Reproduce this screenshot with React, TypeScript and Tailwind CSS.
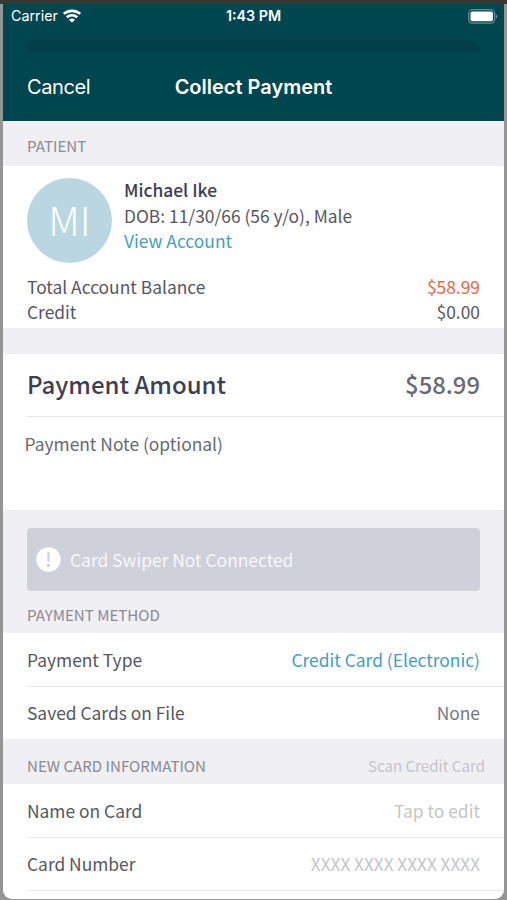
import React from 'react';

interface SectionHeaderProps {
    title: string;
    action?: string;
    sizeClass?: string;
}

interface RowProps {
    label: string;
    value: string;
    valueClass: string;
    sizeClass?: string;
}

const WifiIcon: React.FC = () => (
    <svg width="18" height="14" viewBox="0 0 18 14" fill="none" stroke="white" strokeWidth="2.6">
        <path d="M.8 4.9C5.3 .8 12.7 .8 17.2 4.9" />
        <path d="M3.8 8.3C6.7 5.6 11.3 5.6 14.2 8.3" />
        <path d="M9 13.6L5.9 10.7C7.7 9.1 10.3 9.1 12.1 10.7Z" fill="white" stroke="none" />
    </svg>
);

const BatteryIcon: React.FC = () => (
    <svg width="30" height="15" viewBox="0 0 30 15">
        <rect x=".7" y=".7" width="26" height="13.4" rx="4" fill="none" stroke="white" strokeOpacity=".4" strokeWidth="1.3" />
        <rect x="2.5" y="2.6" width="22.4" height="9.6" rx="1.8" fill="white" />
        <path d="M28 5.2C29.5 6 29.5 8.8 28 9.6Z" fill="white" fillOpacity=".45" />
    </svg>
);

const AlertIcon: React.FC = () => (
    <svg width="25" height="25" viewBox="0 0 25 25">
        <circle cx="12.5" cy="12.5" r="12.2" fill="white" />
        <path d="M11.2 5.2H13.8L13.3 15H11.7Z" fill="#ced1da" />
        <circle cx="12.5" cy="18.5" r="1.7" fill="#ced1da" />
    </svg>
);

const SectionHeader: React.FC<SectionHeaderProps> = ({ title, action, sizeClass = 'h-[45px] pt-[8px]' }) => (
    <div className={`flex shrink-0 items-center justify-between bg-[#efeff4] pr-[19px] pl-6 text-[15.1px] text-[#8b8b91] ${sizeClass}`}>
        <span>{title}</span>
        {action && <span className="text-[#c5c5ca]">{action}</span>}
    </div>
);

const Row: React.FC<RowProps> = ({ label, value, valueClass, sizeClass = 'h-[53px]' }) => (
    <div className={`ml-6 flex shrink-0 items-center justify-between pr-6 ${sizeClass}`}>
        <span>{label}</span>
        <span className={valueClass}>{value}</span>
    </div>
);

const Divider: React.FC = () => <div className="ml-6 h-px shrink-0 bg-[#e8e8ea]" />;

export default function App() {
    return (
        <div className="h-[900px] w-[507px] overflow-hidden bg-[#969595] pr-[3px] pb-px pl-[3px] font-['Noto_Sans_CJK_SC',sans-serif] text-[17.4px] leading-[25px] text-[#56565f]">
            <div className="-mx-[3px] h-1 bg-[#393734]" />
            <div className="flex h-[895px] flex-col overflow-hidden rounded-b-[9px] bg-white">
                <header className="flex h-[117px] shrink-0 flex-col bg-[#00464f] font-['Inter',sans-serif] text-white">
                    <div className="grid h-[25px] grid-cols-3 items-center pr-[6px] pl-2 text-[14.3px] leading-none">
                        <div className="flex items-center gap-[5px]">
                            <span>Carrier</span>
                            <WifiIcon />
                        </div>
                        <span className="-ml-[2px] text-center font-semibold">1:43 PM</span>
                        <div className="flex justify-end"><BatteryIcon /></div>
                    </div>
                    <div className="mx-6 mt-[11px] h-3 rounded-t-[10px] bg-[#003f48]" />
                    <div className="grid grow grid-cols-[1fr_auto_1fr] items-center px-6 text-[20px] leading-none">
                        <span className="tracking-[-0.4px]">Cancel</span>
                        <span className="font-semibold">Collect Payment</span>
                    </div>
                </header>

                <SectionHeader title="PATIENT" sizeClass="h-[45px] pt-[4px]" />
                <section className="h-[162px] shrink-0 px-6 pt-3">
                    <div className="flex items-start gap-3">
                        <div className="flex size-[85px] items-center justify-center rounded-full bg-[#bad6e0] pb-[2px] text-[40px] font-extralight text-white">MI</div>
                        <div className="-mt-px leading-[25.5px]">
                            <div className="font-medium text-[#3e3e4f]">Michael Ike</div>
                            <div>DOB: 11/30/66 (56 y/o), Male</div>
                            <div className="text-[#429fbf]">View Account</div>
                        </div>
                    </div>
                    <div className="mt-[11px] flex justify-between">
                        <span>Total Account Balance</span>
                        <span className="text-[#ed6544]">$58.99</span>
                    </div>
                    <div className="flex justify-between">
                        <span>Credit</span>
                        <span>$0.00</span>
                    </div>
                </section>

                <div className="h-[26px] shrink-0 bg-[#efeff4]" />
                <div className="flex h-[62px] shrink-0 items-center justify-between px-6 pb-[3px] text-[24px] font-medium text-[#3f3f54]">
                    <span>Payment Amount</span>
                    <span className="text-[23.8px] text-[#696978]">$58.99</span>
                </div>
                <Divider />
                <div className="h-[93px] shrink-0 px-[21.5px] pt-[14px] text-[#686870]">Payment Note (optional)</div>

                <div className="h-[81px] shrink-0 bg-[#efeff4] px-6 pt-[18px]">
                    <div className="flex h-[63px] items-center gap-[9px] rounded-[4px] bg-[#ced1da] pl-[9px] text-[#f7f7fa]">
                        <AlertIcon />
                        <span>Card Swiper Not Connected</span>
                    </div>
                </div>
                <SectionHeader title="PAYMENT METHOD" sizeClass="h-[42px] pt-[4px]" />
                <Row label="Payment Type" value="Credit Card (Electronic)" valueClass="text-[#429fbf]" />
                <Divider />
                <Row label="Saved Cards on File" value="None" valueClass="text-[#777782]" sizeClass="h-[52px] pb-px" />

                <SectionHeader title="NEW CARD INFORMATION" action="Scan Credit Card" />
                <Row label="Name on Card" value="Tap to edit" valueClass="text-[#c5c5c8]" />
                <Divider />
                <Row label="Card Number" value="XXXX XXXX XXXX XXXX" valueClass="text-[17.2px] text-[#c5c5c8]" sizeClass="h-[52px] pb-px" />
                <Divider />
            </div>
        </div>
    );
}
